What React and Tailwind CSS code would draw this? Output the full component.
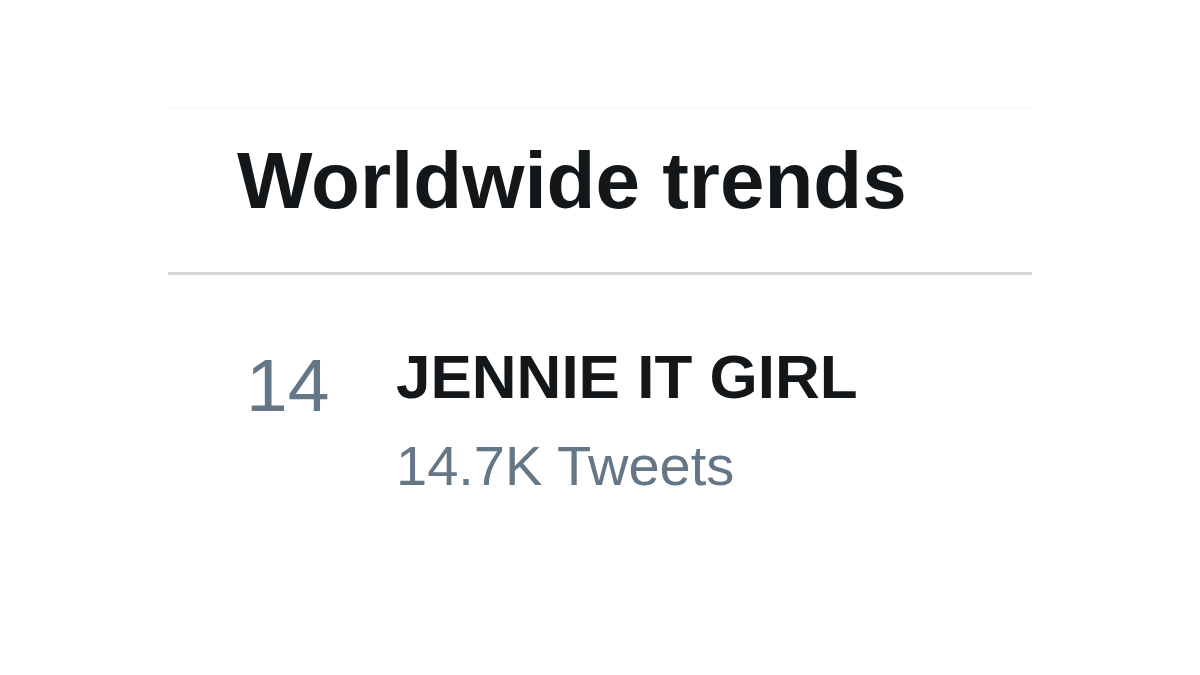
export default function App() {
  return (
    <div className="w-[1200px] h-[675px] bg-white overflow-hidden font-['Liberation_Sans',Arial,sans-serif]">
      <div className="ml-[168px] mt-[107px] w-[864px] border-t border-[#f6f6f3]">
        <div className="pt-[33px] pl-[69px]">
          <h2 className="text-[80px] leading-[80px] font-bold text-[#14171a]">
            Worldwide trends
          </h2>
        </div>
        <div className="mt-[51px] h-[3px] bg-[#d3d7da]" />
        <div className="flex pt-[71px] pl-[78px]">
          <span className="w-[150px] mt-[2px] text-[75px] leading-[75px] text-[#657786]">
            14
          </span>
          <div className="flex flex-col">
            <span className="text-[62px] leading-[62px] font-bold text-[#14171a]">
              JENNIE IT GIRL
            </span>
            <span className="mt-[30px] text-[56px] leading-[56px] text-[#657786]">
              14.7K Tweets
            </span>
          </div>
        </div>
      </div>
    </div>
  );
}
